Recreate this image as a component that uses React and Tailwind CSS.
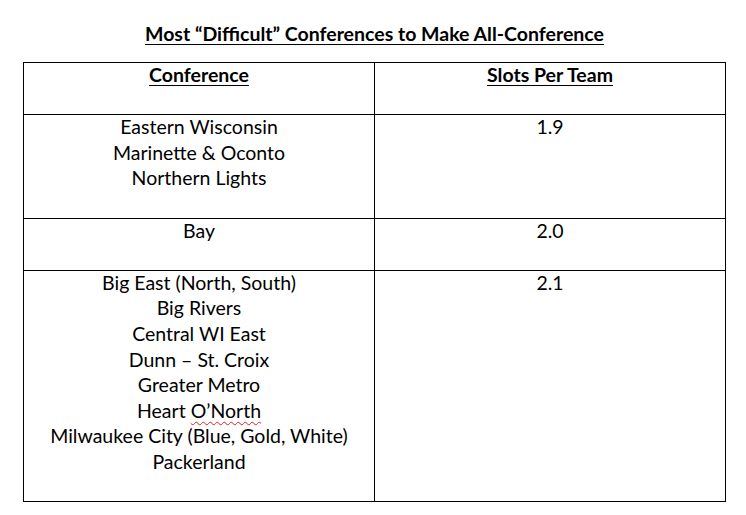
import React from 'react';

const rows = [
  { names: ['Eastern Wisconsin', 'Marinette & Oconto', 'Northern Lights'], slots: '1.9' },
  { names: ['Bay'], slots: '2.0' },
  {
    names: [
      'Big East (North, South)',
      'Big Rivers',
      'Central WI East',
      'Dunn – St. Croix',
      'Greater Metro',
      'HEART',
      'Milwaukee City (Blue, Gold, White)',
      'Packerland',
    ],
    slots: '2.1',
  },
];

// Word's spell check squiggle sits under "O’North"
const Name = ({ text }) => {
  if (text !== 'HEART') return <div>{text}</div>;
  return (
    <div>
      Heart{' '}
      <span className="underline decoration-wavy decoration-[#e02020] decoration-1 underline-offset-[3px]">
        O’North
      </span>
    </div>
  );
};

const cell = 'border border-black align-top pb-[26.6px]';

export default function App() {
  return (
    <div
      className="w-[746px] h-[515px] bg-white text-black pt-[21px] pl-[23px]"
      style={{ fontFamily: 'Lato, "Open Sans", sans-serif' }}
    >
      <div className="w-[703px] text-center text-[19.5px] leading-[26px] font-bold">
        <span className="underline underline-offset-[3px] decoration-1">
          Most “Difficult” Conferences to Make All-Conference
        </span>
      </div>

      <table className="mt-[15px] w-[703px] border-collapse text-[19.5px] leading-[25.6px] text-center">
        <tbody>
          <tr>
            <td className={`w-[351px] font-bold ${cell}`}>
              <div className="-mt-px">
                <span className="underline underline-offset-[3px] decoration-1">Conference</span>
              </div>
            </td>
            <td className={`font-bold ${cell}`}>
              <div className="-mt-px">
                <span className="underline underline-offset-[3px] decoration-1">Slots Per Team</span>
              </div>
            </td>
          </tr>
          {rows.map((row) => (
            <tr key={row.slots}>
              <td className={cell}>
                <div className="-mt-px">
                  {row.names.map((n) => (
                    <Name key={n} text={n} />
                  ))}
                </div>
              </td>
              <td className={cell}>
                <div className="-mt-px">{row.slots}</div>
              </td>
            </tr>
          ))}
        </tbody>
      </table>
    </div>
  );
}
